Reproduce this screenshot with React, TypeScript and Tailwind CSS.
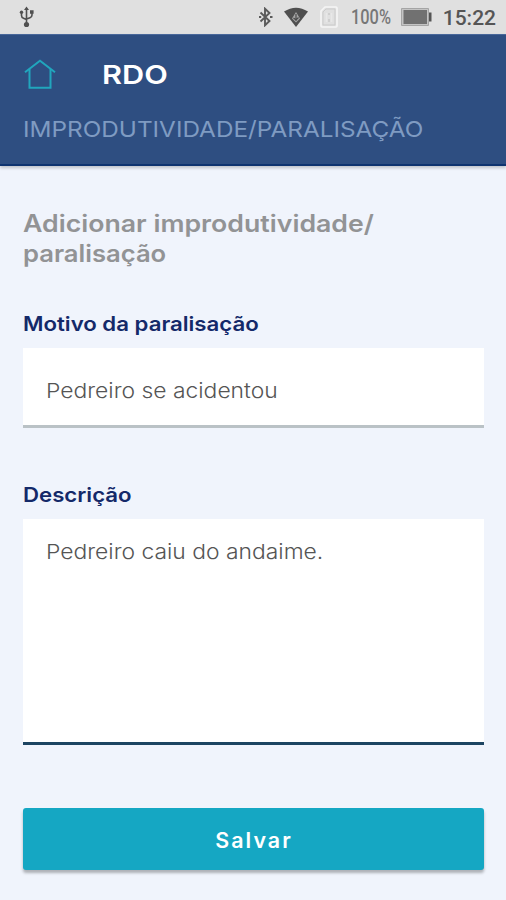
type FieldProps = {
    label: string
    value: string
    boxClass: string
}

const UsbIcon = () => (
    <svg className="ml-[19px] h-[22px] w-4" viewBox="0 0 16 22" fill="none" stroke="#505050" strokeWidth="1.6">
        <path d="M7.5 3v15M2.5 6v3.5q0 2 2 2.7l3 1.3M13 6v3q0 2-2 2.7l-3.5 1.3" />
        <path d="M7.5 0.5 10 4H5zM11 4.2h3.6v3.6H11z" fill="#505050" stroke="none" />
        <circle cx="2.5" cy="6.3" r="1.7" fill="#505050" stroke="none" />
        <circle cx="7.5" cy="18.5" r="2.6" fill="#505050" stroke="none" />
    </svg>
)

const BluetoothIcon = () => (
    <svg className="h-5 w-[14px]" viewBox="0 0 14 20" fill="none" stroke="#5a5a5a" strokeWidth="1.9">
        <path d="m1.500 5.500 9 8.500-4.500 4.300V1.700L10.500 6l-9 8.500" />
        <path d="M0 10h2.200M11 10h2.500" strokeWidth="2" />
    </svg>
)

const WifiIcon = () => (
    <svg className="ml-[11px] h-5 w-6" viewBox="0 0 24 20">
        <path d="M0 4.500Q12-3.200 24 4.500L12 20z" fill="#4f4f4f" />
        <path d="M12 5 8 11.500l4 4 4-4z" fill="#a5a5a5" />
        <path d="M12 7v7M9.500 11 12 13l2.500-2.500" stroke="#4b4b4b" strokeWidth="1.2" fill="none" />
    </svg>
)

const SimIcon = () => (
    <svg className="ml-3 h-[22px] w-[18px]" viewBox="0 0 18 22" fill="none">
        <path d="M5 1H16q1 0 1 1v18q0 1-1 1H2q-1 0-1-1V5z" stroke="#f5f5f5" strokeWidth="1.6" />
        <path d="M6 3h9v16H3V6z" stroke="#cbcbcb" strokeWidth="1" />
        <path d="M6.500 7v9M11.500 7v9" stroke="#e8e8e8" strokeWidth="1.5" />
        <path d="M9 7v2M9 13v3" stroke="#c4c4c4" strokeWidth="1.2" />
    </svg>
)

const BatteryIcon = () => (
    <svg className="ml-[10px] h-[18px] w-[31px]" viewBox="0 0 31 18">
        <path d="M.5.5h27v17H.5z" fill="#c4c4c4" stroke="#a5a5a5" />
        <path d="M2.500 2h23.500v14h-23.500z" fill="#717171" />
        <path d="M28 4.500h2.500v9H28z" fill="#555" />
    </svg>
)

const HomeIcon = () => (
    <svg className="-mt-[2px] ml-px h-[31px] w-8" viewBox="0 0 32 31" fill="none" stroke="#21a6bd" strokeWidth="2">
        <path d="M1 13.300 16 1.700l15 11.600" />
        <path d="M5.500 10v18.700h21V10" />
    </svg>
)

const StatusBar = () => (
    <div className="flex h-[34px] items-center bg-[#e0e0e0] font-['Roboto',sans-serif]">
        <UsbIcon />
        <div className="ml-auto flex items-center pr-[10px]">
            <BluetoothIcon />
            <WifiIcon />
            <SimIcon />
            <span className="mt-[2px] ml-[13px] w-10 origin-left scale-x-[0.84] text-[19.5px] leading-none font-medium whitespace-nowrap text-[#777]">100%</span>
            <BatteryIcon />
            <span className="mt-[2px] ml-[11px] text-[21px] leading-none font-medium text-[#555]">15:22</span>
        </div>
    </div>
)

const Field = ({ label, value, boxClass }: FieldProps) => (
    <div>
        <p className="w-fit origin-left scale-x-[1.11] text-[20px] leading-6 font-semibold text-[#142969]">{label}</p>
        <div className={`mt-3 bg-white px-[23px] text-[20.5px] leading-6 font-light text-[#555] ${boxClass}`}>
            <p className="w-fit origin-left scale-x-[1.115]">{value}</p>
        </div>
    </div>
)

export default function App() {
    return (
        <div className="flex h-[900px] w-[506px] flex-col overflow-hidden bg-[#f0f4fc] font-['Inter',sans-serif]">
            <StatusBar />
            <header className="h-[132px] border-t border-b-2 border-t-[#48679a] border-b-[#0f3470] bg-[#2e4e81] px-[23px] shadow-[0_2px_3px_rgba(0,0,0,0.2)]">
                <div className="flex items-center pt-[24px]">
                    <HomeIcon />
                    <h1 className="ml-[46px] origin-left scale-x-[1.18] text-[26px] leading-8 font-semibold text-white">RDO</h1>
                </div>
                <p className="mt-6 w-fit origin-left scale-x-[1.105] text-[22px] leading-7 whitespace-nowrap text-[#7f9bc2]">IMPRODUTIVIDADE/PARALISAÇÃO</p>
            </header>
            <main className="flex flex-col px-[23px] pt-[43px] pr-[22px]">
                <h2 className="mb-[43px] text-[24px] leading-[30px] font-semibold text-[#929395]">
                    <span className="block w-fit origin-left scale-x-[1.112]">Adicionar improdutividade/</span>
                    <span className="block w-fit origin-left scale-x-[1.067]">paralisação</span>
                </h2>
                <Field label="Motivo da paralisação" value="Pedreiro se acidentou" boxClass="h-20 border-b-3 border-[#bac2c6] pt-[31px]" />
                <div className="mt-[55px]">
                    <Field label="Descrição" value="Pedreiro caiu do andaime." boxClass="h-[226px] border-b-3 border-[#1d4562] pt-[21px]" />
                </div>
                <button className="mt-[63px] h-[62px] rounded-[3px] bg-[#15a7c3] pt-[3px] text-[21px] font-semibold tracking-[2px] text-white shadow-[0_3px_3px_rgba(0,0,0,0.28)]">
                    <span className="inline-block scale-x-[1.02]">Salvar</span>
                </button>
            </main>
        </div>
    )
}
